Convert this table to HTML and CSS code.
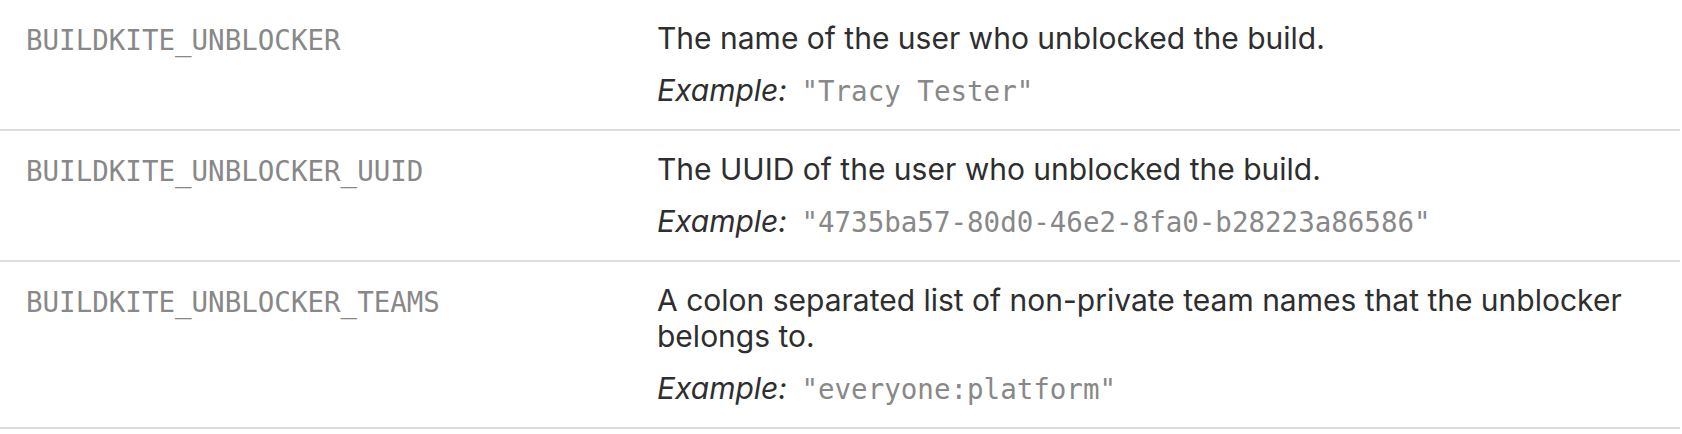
FILE: index.html
```html
<!DOCTYPE html>
<html>
<head>
<meta charset="utf-8">
<link rel="stylesheet" href="styles.css">
</head>
<body>
<div class="env-table">
  <div class="env-row">
    <div class="env-name">BUILDKITE_UNBLOCKER</div>
    <div class="env-desc">
      <p class="desc-text">The name of the user who unblocked the build.</p>
      <p class="desc-example"><em>Example:</em> <code>"Tracy Tester"</code></p>
    </div>
  </div>
  <div class="env-row">
    <div class="env-name">BUILDKITE_UNBLOCKER_UUID</div>
    <div class="env-desc">
      <p class="desc-text">The UUID of the user who unblocked the build.</p>
      <p class="desc-example"><em>Example:</em> <code>"4735ba57-80d0-46e2-8fa0-b28223a86586"</code></p>
    </div>
  </div>
  <div class="env-row">
    <div class="env-name">BUILDKITE_UNBLOCKER_TEAMS</div>
    <div class="env-desc">
      <p class="desc-text">A colon separated list of non-private team names that the unblocker belongs to.</p>
      <p class="desc-example"><em>Example:</em> <code>"everyone:platform"</code></p>
    </div>
  </div>
</div>
</body>
</html>
```
FILE: styles.css
```css
html, body {
  margin: 0;
  padding: 0;
  background: #ffffff;
}

.env-table {
  width: 1680px;
  font-family: "Inter", "Noto Sans", sans-serif;
  color: #2e2e2e;
}

.env-row {
  display: grid;
  grid-template-columns: 631px 1fr;
  border-bottom: 2px solid #dddddd;
}

.env-name {
  padding: 22px 26px 18px 26px;
  font-family: "DejaVu Sans Mono", monospace;
  font-size: 27.5px;
  line-height: 36px;
  color: #888888;
}

.env-desc {
  padding: 20px 0 20px 26px;
  font-size: 30px;
  line-height: 36px;
}

.desc-text {
  margin: 0;
}

.desc-example {
  margin: 16px 0 0 0;
}

.desc-example em {
  font-style: italic;
}

.desc-example code {
  font-family: "DejaVu Sans Mono", monospace;
  font-size: 27.5px;
  color: #888888;
  margin-left: 6px;
}
```
